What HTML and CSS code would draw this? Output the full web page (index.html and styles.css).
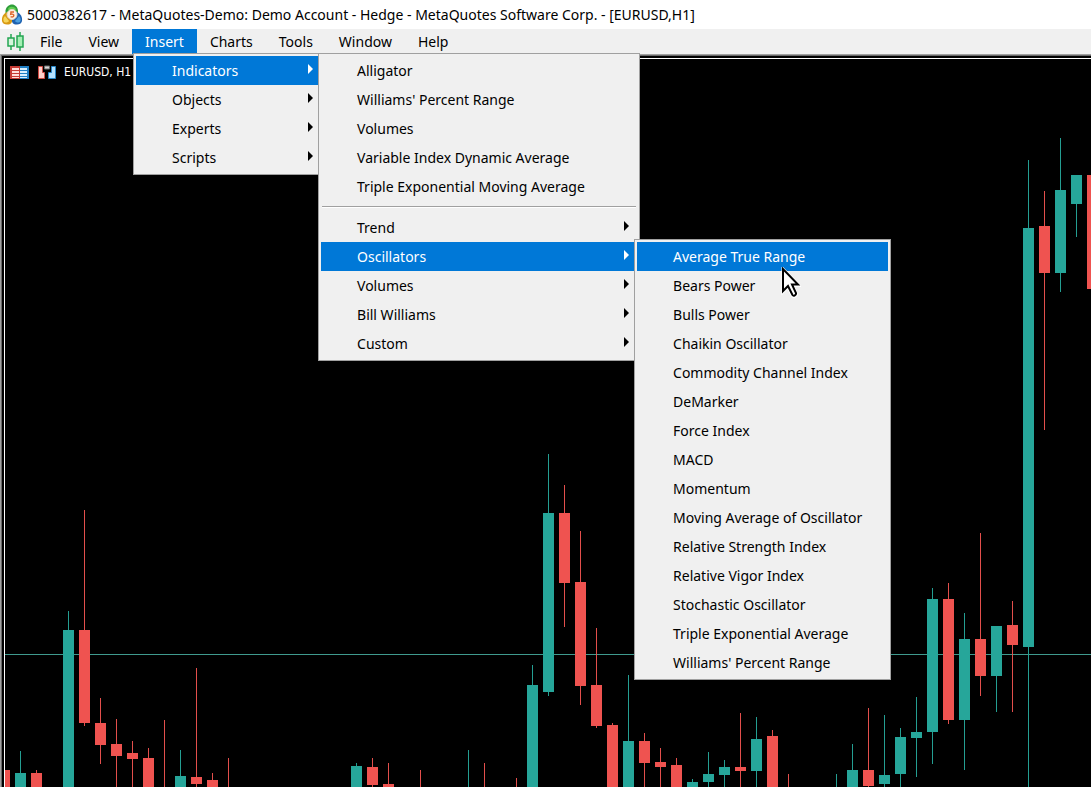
FILE: index.html
```html
<!DOCTYPE html>
<html lang="en">
<head>
<meta charset="utf-8">
<meta name="viewport" content="width=device-width, initial-scale=1">
<title>5000382617 - MetaQuotes-Demo: Demo Account</title>
<link rel="stylesheet" href="styles.css">
</head>
<body>
<div class="app">
  <header class="titlebar">
    <svg class="app-logo" width="22" height="22" viewBox="0 0 22 22" aria-hidden="true">
      <path d="M4.500 11V6.500C5 3 8 .5 11 .5s5.500 2.500 6 6V11z" fill="#2f9e3a"/>
      <path d="M7 5c1-3 6-3 8 0l-1 2H8z" fill="#62cf52"/>
      <path d="M6 8C2.500 9.500 .5 13 1 17c.4 2.500 2.500 3.500 5 3.500 2.500 0 4.500-.5 5-3V8z" fill="#d99a12"/>
      <path d="M4 12c-2 2-2 4-1 6 2 1 4 .5 5-1z" fill="#f6d65c"/>
      <path d="M16 8c3.500 1.500 5.500 5 5 9-.4 2.500-2.500 3.500-5 3.500-2.500 0-4.500-.5-5-3V8z" fill="#1f62b0"/>
      <path d="M18 12c2 2 2 4 1 6-2 1-4 .5-5-1z" fill="#4c9fe0"/>
      <circle cx="11" cy="10.500" r="5" fill="#fff0e2" stroke="#e4d8c8"/>
      <path d="M13 8H10l-.3 2.300c2-.5 3.300.1 3.100 1.400-.2 1.300-1.800 1.500-3.200.9" fill="none" stroke="#e0662c" stroke-width="1.400"/>
    </svg>
    <h1 class="title">5000382617 - MetaQuotes-Demo: Demo Account - Hedge - MetaQuotes Software Corp. - [EURUSD,H1]</h1>
  </header>

  <nav class="menubar" aria-label="Main menu">
    <svg class="doc-icon" width="18" height="20" viewBox="0 0 18 20" aria-hidden="true">
      <path d="M4 2v16M13 0v19" stroke="#23a552" stroke-width="1.500"/>
      <rect x="1" y="6" width="6" height="8" fill="#d5f5dc" stroke="#23a552" stroke-width="1.500"/>
      <rect x="10" y="4" width="6" height="11" fill="#a4efb4" stroke="#23a552" stroke-width="1.500"/>
    </svg>
    <ul class="bar-list">
      <li><button class="bar-button" type="button">File</button></li>
      <li><button class="bar-button" type="button">View</button></li>
      <li class="has-menu">
        <button class="bar-button active" type="button" aria-expanded="true">Insert</button>
        <ul class="menu menu-insert">
          <li class="has-menu">
            <button class="item parent active" type="button" aria-expanded="true">Indicators</button>
            <ul class="menu submenu menu-indicators">
              <li><button class="item" type="button">Alligator</button></li>
              <li><button class="item" type="button">Williams' Percent Range</button></li>
              <li><button class="item" type="button">Volumes</button></li>
              <li><button class="item" type="button">Variable Index Dynamic Average</button></li>
              <li><button class="item" type="button">Triple Exponential Moving Average</button></li>
              <li class="separator" role="separator"></li>
              <li><button class="item parent" type="button">Trend</button></li>
              <li class="has-menu">
                <button class="item parent active" type="button" aria-expanded="true">Oscillators</button>
                <ul class="menu submenu menu-oscillators">
                  <li><button class="item active" type="button">Average True Range</button></li>
                  <li><button class="item" type="button">Bears Power</button></li>
                  <li><button class="item" type="button">Bulls Power</button></li>
                  <li><button class="item" type="button">Chaikin Oscillator</button></li>
                  <li><button class="item" type="button">Commodity Channel Index</button></li>
                  <li><button class="item" type="button">DeMarker</button></li>
                  <li><button class="item" type="button">Force Index</button></li>
                  <li><button class="item" type="button">MACD</button></li>
                  <li><button class="item" type="button">Momentum</button></li>
                  <li><button class="item" type="button">Moving Average of Oscillator</button></li>
                  <li><button class="item" type="button">Relative Strength Index</button></li>
                  <li><button class="item" type="button">Relative Vigor Index</button></li>
                  <li><button class="item" type="button">Stochastic Oscillator</button></li>
                  <li><button class="item" type="button">Triple Exponential Average</button></li>
                  <li><button class="item" type="button">Williams' Percent Range</button></li>
                </ul>
              </li>
              <li><button class="item parent" type="button">Volumes</button></li>
              <li><button class="item parent" type="button">Bill Williams</button></li>
              <li><button class="item parent" type="button">Custom</button></li>
            </ul>
          </li>
          <li><button class="item parent" type="button">Objects</button></li>
          <li><button class="item parent" type="button">Experts</button></li>
          <li><button class="item parent" type="button">Scripts</button></li>
        </ul>
      </li>
      <li><button class="bar-button" type="button">Charts</button></li>
      <li><button class="bar-button" type="button">Tools</button></li>
      <li><button class="bar-button" type="button">Window</button></li>
      <li><button class="bar-button" type="button">Help</button></li>
    </ul>
  </nav>

  <main class="workspace">
    <section class="chart-window" aria-label="EURUSD, H1 chart">
      <svg class="candles" id="candles" role="img" aria-label="Candlestick chart"></svg>
      <div class="chart-head">
        <svg width="20" height="15" viewBox="0 0 20 15" aria-hidden="true">
          <path d="M0 1h10v13H0z" fill="#c63b35"/>
          <path d="M10 1h9v13h-9z" fill="#1f7fc4"/>
          <path d="M2 3h7v2H2zM2 6h7v2H2zM2 9h7v2H2zM2 12h7v1H2z" fill="#ffdeda"/>
          <path d="M10 3h7v2h-7zM10 6h7v2h-7zM10 9h7v2h-7zM10 12h7v1h-7z" fill="#d8f0ff"/>
        </svg>
        <svg width="20" height="15" viewBox="0 0 20 15" aria-hidden="true">
          <path d="M1.500 1.500h4v6h2v6h-6z" fill="#ffd0cb" stroke="#cf4a42"/>
          <path d="M18.500 1.500h-4v6h-3v6h7z" fill="#b5e2ff" stroke="#2687c9"/>
          <path d="M7.500 1h5v3h-5z" fill="#d8d8d8" stroke="#6b6b6b"/>
        </svg>
        <span class="symbol">EURUSD, H1</span>
      </div>
    </section>
  </main>

  <svg class="pointer" width="20" height="32" viewBox="0 0 20 32" aria-hidden="true">
    <path d="M2 2v23l5-5 4.500 9c1 1.500 4.500 0 4-2L11.500 18.500H18z" fill="#fff" stroke="#fff" stroke-width="3"/>
    <path d="M2 2v22l5-5 4.500 9c1 1.500 4 0 3.500-2L11 17.500h6z" fill="#fff" stroke="#000" stroke-width="2"/>
  </svg>
</div>
<script src="chart.js"></script>
</body>
</html>
```
FILE: styles.css
```css
* {
  box-sizing: border-box;
}

body {
  margin: 0;
  background: #000;
  color: #000;
  font-family: "Noto Sans", "Open Sans", sans-serif;
  font-size: 14px;
  line-height: 20px;
}

ul {
  margin: 0;
  padding: 0;
  list-style: none;
}

button {
  margin: 0;
  border: 0;
  background: none;
  color: inherit;
  font: inherit;
  text-align: left;
  white-space: nowrap;
}

svg {
  display: block;
  flex: none;
}

.app {
  display: flex;
  flex-direction: column;
  height: 100vh;
  overflow: hidden;
}

.titlebar {
  display: flex;
  align-items: center;
  gap: 4px;
  height: 29px;
  padding-left: 1px;
  background: #fff;
}

.title {
  margin: 0;
  font-size: 14px;
  font-weight: 400;
  white-space: nowrap;
}

.menubar {
  display: flex;
  align-items: center;
  gap: 2px;
  height: 25px;
  padding-left: 7px;
  background: #f0f0f0;
}

.bar-list {
  display: flex;
}

.bar-button {
  display: block;
  height: 25px;
  padding: 0 13px;
}

.active {
  background: #0078d7;
  color: #fff;
}

.has-menu {
  position: relative;
}

.menu {
  position: absolute;
  z-index: 1;
  top: 24px;
  left: 1px;
  padding: 2px;
  border: 1px solid #a0a0a0;
  background: #f0f0f0;
}

.submenu {
  top: -3px;
  left: calc(100% - 3px);
}

.menu-insert {
  width: 191px;
}

.menu-indicators {
  width: 322px;
}

.menu-oscillators {
  width: 257px;
}

.item {
  display: flex;
  align-items: center;
  justify-content: space-between;
  width: 100%;
  height: 29px;
  padding: 0 8px 0 36px;
}

.parent::after {
  content: "";
  margin-bottom: 3px;
  border: solid transparent;
  border-width: 5px 0 5px 5px;
  border-left-color: currentColor;
}

.separator {
  height: 12px;
  padding: 5px 1px;
}

.separator::before {
  content: "";
  display: block;
  height: 1px;
  border-top: 1px solid #a0a0a0;
  background: #fff;
}

.workspace {
  display: flex;
  flex: 1;
  min-height: 0;
  padding: 2px 0 0 2px;
  border-top: 1px solid #a0a0a0;
  border-left: 1px solid #a0a0a0;
  background: #000;
  box-shadow: inset 1px 1px #696969;
}

.chart-window {
  display: grid;
  flex: 1;
  min-width: 0;
  margin: 1px 0 0 1px;
  border-top: 1px solid #fff;
  border-left: 1px solid #fff;
}

.candles,
.chart-head {
  grid-area: 1 / 1;
}

.candles {
  width: 100%;
  height: 100%;
  overflow: hidden;
}

.candles .up {
  fill: #26a69a;
}

.candles .down {
  fill: #ef5350;
}

.candles .wick {
  opacity: 0.95;
}

.candles .price {
  fill: #3f9a8e;
}

.chart-head {
  display: flex;
  align-items: center;
  align-self: start;
  gap: 7px;
  padding: 2px 5px;
  color: #fff;
}

.symbol {
  font-family: "DejaVu Sans Condensed", "DejaVu Sans", sans-serif;
  font-size: 12px;
  line-height: 22px;
}

.pointer {
  position: absolute;
  z-index: 2;
  top: 267px;
  left: 781px;
}
```
FILE: chart.js
```js
// Each bar: [centre x, direction, high, body top, body bottom, low]; 0 body = wick only.
const bars = [
  [4, 'down', 770, 770, 900, 900], [20, 'up', 751, 773, 900, 900], [36, 'down', 770, 773, 900, 900],
  [68, 'up', 611, 630, 900, 900], [84, 'down', 510, 630, 723, 726], [100, 'down', 698, 723, 745, 764],
  [116, 'down', 719, 744, 756, 900], [132, 'down', 741, 753, 759, 900], [148, 'down', 748, 758, 900, 900],
  [164, 'down', 720, 0, 0, 900], [180, 'up', 750, 776, 900, 900], [196, 'down', 668, 777, 784, 900],
  [212, 'down', 773, 780, 900, 900], [228, 'down', 758, 0, 0, 900], [356, 'up', 763, 766, 900, 900],
  [372, 'down', 758, 767, 785, 900], [388, 'down', 763, 784, 900, 900], [420, 'down', 770, 0, 0, 900],
  [468, 'up', 750, 0, 0, 900], [484, 'down', 763, 0, 0, 900], [516, 'down', 778, 0, 0, 900],
  [532, 'up', 665, 685, 900, 900], [548, 'up', 454, 513, 692, 696], [564, 'down', 485, 513, 583, 627],
  [580, 'down', 531, 582, 686, 705], [596, 'down', 628, 685, 726, 728], [612, 'down', 723, 725, 900, 900],
  [628, 'up', 675, 741, 900, 900], [644, 'down', 733, 741, 763, 900], [660, 'down', 748, 762, 767, 900],
  [676, 'down', 758, 765, 900, 900], [692, 'up', 779, 782, 900, 900], [708, 'up', 752, 774, 782, 900],
  [724, 'up', 760, 767, 775, 900], [740, 'down', 713, 767, 771, 900], [756, 'up', 717, 739, 771, 900],
  [772, 'down', 730, 736, 900, 900], [788, 'down', 774, 0, 0, 900], [836, 'up', 774, 0, 0, 900],
  [852, 'up', 744, 770, 900, 900], [868, 'down', 708, 770, 786, 900], [884, 'up', 715, 775, 784, 900],
  [900, 'up', 728, 737, 774, 900], [916, 'up', 697, 732, 738, 777], [932, 'up', 588, 599, 732, 764],
  [948, 'down', 583, 599, 720, 724], [964, 'up', 613, 639, 720, 770], [980, 'down', 533, 639, 676, 696],
  [996, 'up', 626, 626, 676, 712], [1012, 'down', 601, 625, 645, 712], [1028, 'up', 160, 228, 647, 900],
  [1044, 'down', 191, 226, 273, 430], [1060, 'up', 138, 190, 273, 292], [1076, 'up', 175, 175, 204, 237],
  [1092, 'down', 175, 175, 289, 289]
];

const originX = 5;
const originY = 59;
const svg = document.getElementById('candles');

function box(cls, x, y, width, height) {
  const rect = document.createElementNS('http://www.w3.org/2000/svg', 'rect');
  rect.setAttribute('class', cls);
  rect.setAttribute('x', x);
  rect.setAttribute('y', y);
  rect.setAttribute('width', width);
  rect.setAttribute('height', height);
  svg.appendChild(rect);
}

box('price', 0, 654 - originY, '100%', 1);
for (const [x, dir, high, top, bottom, low] of bars) {
  box(dir + ' wick', x - originX, high - originY, 1, low - high);
  if (top) box(dir, x - 5 - originX, top - originY, 11, bottom - top);
}
```
